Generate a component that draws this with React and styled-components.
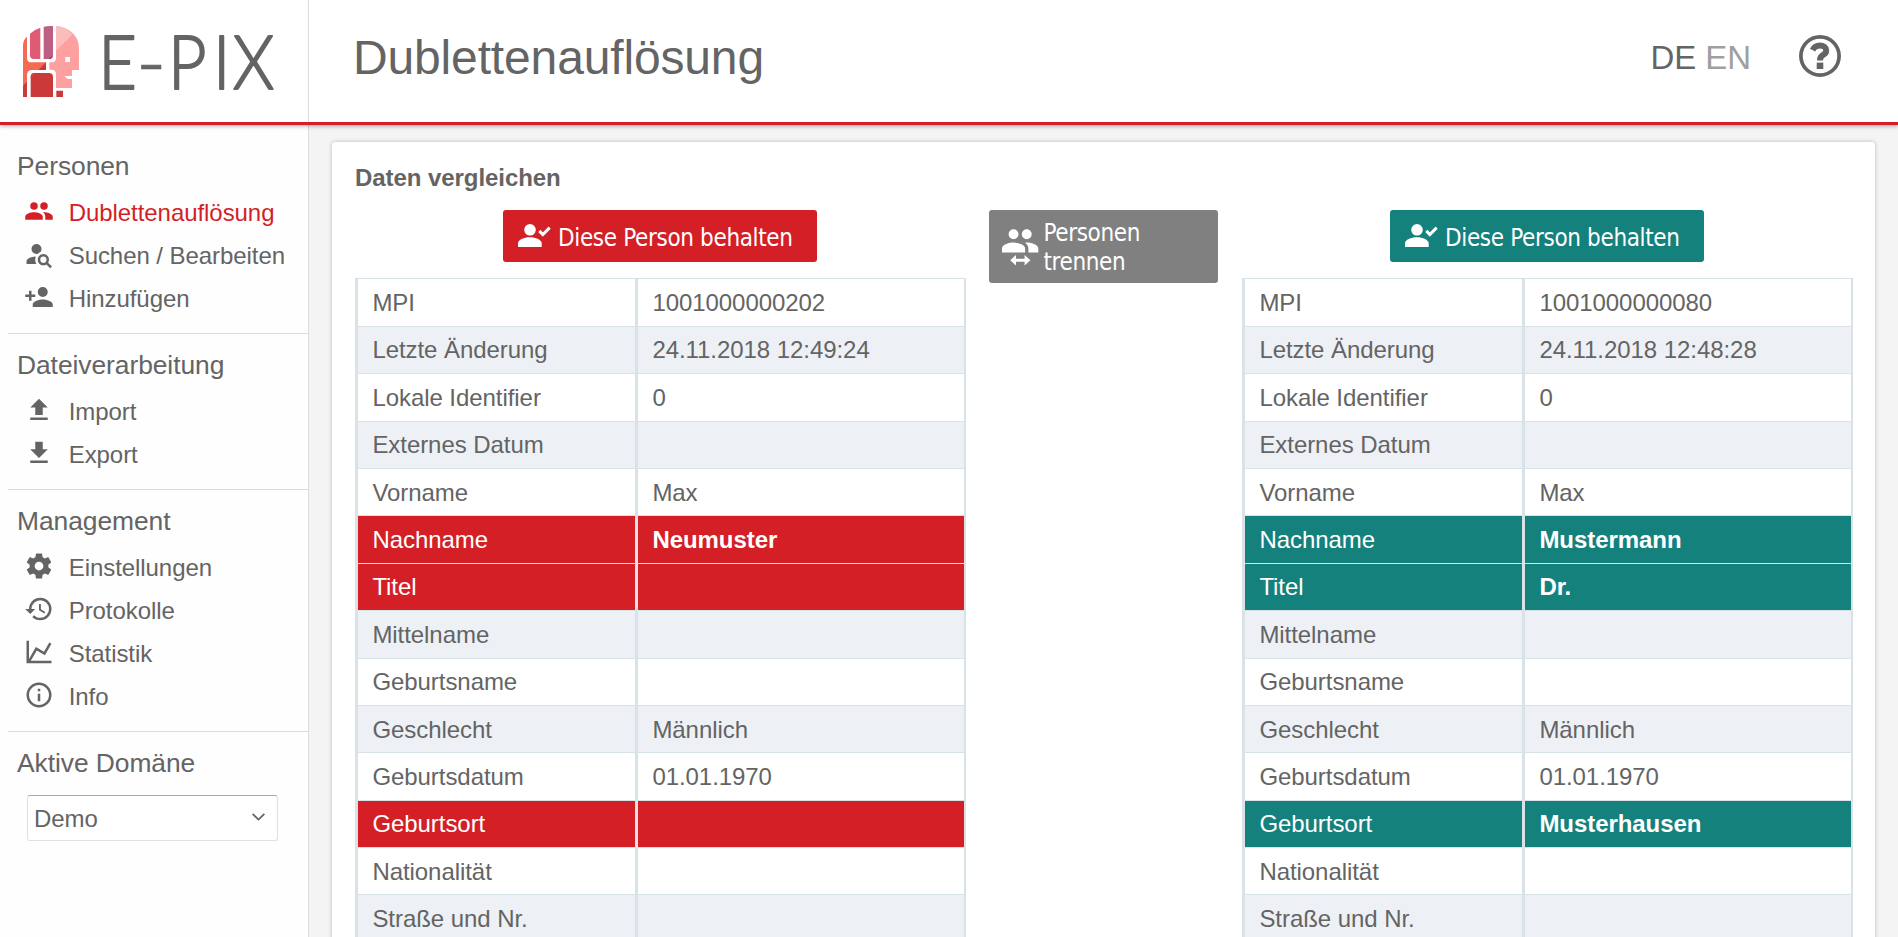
import React from "react";
import styled, { createGlobalStyle, ThemeProvider } from "styled-components";

const theme = {
  text: "#646464",
  muted: "#9f9f9f",
  red: "#d41f26",
  teal: "#14817d",
  grey: "#808080",
  line: "#d9e2e7",
  stripe: "#edf1f6",
};

const GlobalStyle = createGlobalStyle`
  * { box-sizing: border-box; }
  body {
    margin: 0;
    overflow: hidden;
    background: #f4f4f4;
    color: ${theme.text};
    font-family: "Liberation Sans", Arial, sans-serif;
    font-size: 24px;
    letter-spacing: -0.06px;
    font-variant-ligatures: none;
  }
`;

const Page = styled.div`
  display: flex;
  flex-direction: column;
  height: 937px;
  overflow: hidden;
`;

const Header = styled.header`
  position: relative;
  z-index: 1;
  flex: none;
  display: flex;
  align-items: stretch;
  height: 125px;
  background: #fff;
  border-bottom: 3px solid ${(p) => p.theme.red};
  box-shadow: 0 1px 4px rgba(0, 0, 0, 0.35);
`;

const Brand = styled.div`
  flex: none;
  width: 309px;
  border-right: 1px solid #dcdcdc;
  svg { display: block; }
`;

const PageTitle = styled.h1`
  flex: 1;
  margin: 0;
  padding: 30px 0 0 44px;
  font-size: 48px;
  line-height: 55px;
  font-weight: 400;
  letter-spacing: -0.15px;
`;

const Languages = styled.nav`
  display: flex;
  gap: 9px;
  padding-top: 38px;
  font-size: 33px;
  line-height: 39px;
`;

const Language = styled.span`
  color: ${(p) => (p.$active ? p.theme.text : p.theme.muted)};
`;

const HelpButton = styled.div`
  padding: 35px 57px 0 48px;
  svg { display: block; }
`;

const Body = styled.div`
  flex: 1;
  min-height: 0;
  display: flex;
`;

const Sidebar = styled.aside`
  flex: none;
  width: 309px;
  padding: 10.05px 0 0 8px;
  background: #fefefe;
  border-right: 1px solid #dcdcdc;
`;

const Section = styled.section`
  padding: 10.85px 0 13.1px;
  border-bottom: ${(p) => (p.$last ? "none" : "1px solid #dcdcdc")};
`;

const SectionTitle = styled.h2`
  margin: 0 0 5.4px;
  padding-left: 9px;
  font-size: 26.4px;
  line-height: 40px;
  font-weight: 400;
`;

const MenuItem = styled.div`
  display: flex;
  align-items: center;
  gap: 14px;
  height: 42.9px;
  padding-left: 16.3px;
  white-space: nowrap;
  color: ${(p) => (p.$active ? p.theme.red : "inherit")};
  svg { flex: none; margin-bottom: 3px; }
`;

const MenuLabel = styled.span`
  padding-left: 0.4px;
`;

const Select = styled.div`
  display: flex;
  align-items: center;
  justify-content: space-between;
  width: 251px;
  height: 46px;
  margin: 12px 0 0 19px;
  padding: 2px 12px 0 6px;
  background: #fff;
  border: 1px solid #dde0e7;
  border-top-color: #a8a8ac;
  border-radius: 3px;
  svg { margin-bottom: 3px; }
`;

const Main = styled.main`
  flex: 1;
  min-width: 0;
  padding: 17px 23px 0;
`;

const Card = styled.div`
  height: 900px;
  padding: 22px 22px 0 23px;
  background: #fff;
  border-radius: 3px;
  box-shadow: 0 0 4px rgba(0, 0, 0, 0.24);
`;

const CardTitle = styled.h3`
  margin: 0 0 18px;
  font-size: 24px;
  line-height: 28px;
  font-weight: 700;
`;

const Compare = styled.div`
  display: grid;
  grid-template-columns: 611px 229px 611px;
  column-gap: 23px;
  align-items: start;
`;

const PersonColumn = styled.div`
  display: flex;
  flex-direction: column;
  gap: 16.4px;
  &:last-child { margin-left: 1px; margin-right: -1px; }
`;

const ActionButton = styled.button`
  display: flex;
  align-items: center;
  border: 0;
  border-radius: 3px;
  color: #fff;
  background: ${(p) => p.theme[p.$tone]};
  font-family: "DejaVu Sans Condensed", "DejaVu Sans", sans-serif;
  font-size: 24px;
  line-height: 29px;
  letter-spacing: -0.35px;
  text-align: left;
  svg { flex: none; display: block; }
`;

const KeepButton = styled(ActionButton)`
  align-self: center;
  width: 314px;
  height: 52px;
  margin-right: 1px;
  gap: 7px;
  padding: 5px 0 0 15px;
  white-space: nowrap;
  svg { margin-bottom: 6px; }
`;

const SplitButton = styled(ActionButton)`
  width: 229px;
  height: 73px;
  gap: 4.4px;
  padding: 3px 50px 0 13px;
  svg { margin-bottom: 2px; }
`;

const Table = styled.div`
  border-top: 1px solid ${(p) => p.theme.line};
  border-right: 2px solid ${(p) => p.theme.line};
`;

const Cell = styled.div`
  display: flex;
  align-items: center;
  padding: 0.8px 0 0 14.4px;
  border-left: 3px solid ${(p) => p.theme.line};
  border-bottom: 1px solid ${(p) => p.theme.line};
`;

const Row = styled.div`
  display: grid;
  grid-template-columns: 280px 1fr;
  height: 47.4px;
  background: #fff;
  &:nth-child(even) { background: ${(p) => p.theme.stripe}; }
  && {
    ${(p) => p.$tone && `background: ${p.theme[p.$tone]}; color: #fff;`}
  }
  ${Cell} + ${Cell} { font-weight: ${(p) => (p.$tone ? 700 : 400)}; }
`;

const ICONS = {
  people:
    "M16,13C15.71,13 15.38,13 15.03,13.05C16.19,13.89 17,15 17,16.5V19H23V16.5C23,14.17 18.33,13 16,13M8,13C5.67,13 1,14.17 1,16.5V19H15V16.5C15,14.17 10.33,13 8,13M8,11A3,3 0 0,0 11,8A3,3 0 0,0 8,5A3,3 0 0,0 5,8A3,3 0 0,0 8,11M16,11A3,3 0 0,0 19,8A3,3 0 0,0 16,5A3,3 0 0,0 13,8A3,3 0 0,0 16,11Z",
  search:
    "M15.5,12C18,12 20,14 20,16.5C20,17.38 19.75,18.21 19.31,18.9L22.39,22L21,23.39L17.88,20.32C17.19,20.75 16.37,21 15.5,21C13,21 11,19 11,16.5C11,14 13,12 15.5,12M15.5,14A2.5,2.5 0 0,0 13,16.5A2.5,2.5 0 0,0 15.5,19A2.5,2.5 0 0,0 18,16.5A2.5,2.5 0 0,0 15.5,14M10,4A4,4 0 0,1 14,8C14,8.91 13.69,9.75 13.18,10.43C12.32,10.75 11.55,11.26 10.91,11.9L10,12A4,4 0 0,1 6,8A4,4 0 0,1 10,4M2,20V18C2,15.88 5.31,14.14 9.5,14C9.18,14.78 9,15.62 9,16.5C9,17.79 9.38,19 10,20H2Z",
  add: "M15,14C12.33,14 7,15.33 7,18V20H23V18C23,15.33 17.67,14 15,14M6,10V7H4V10H1V12H4V15H6V12H9V10M15,12A4,4 0 0,0 19,8A4,4 0 0,0 15,4A4,4 0 0,0 11,8A4,4 0 0,0 15,12Z",
  upload: "M9,16V10H5L12,3L19,10H15V16H9M5,20V18H19V20H5Z",
  download: "M5,20H19V18H5M19,9H15V3H9V9H5L12,16L19,9Z",
  cog: "M12,15.5A3.5,3.5 0 0,1 8.5,12A3.5,3.5 0 0,1 12,8.5A3.5,3.5 0 0,1 15.5,12A3.5,3.5 0 0,1 12,15.5M19.43,12.97C19.47,12.65 19.5,12.33 19.5,12C19.5,11.67 19.47,11.34 19.43,11L21.54,9.37C21.73,9.22 21.78,8.95 21.66,8.73L19.66,5.27C19.54,5.05 19.27,4.96 19.05,5.05L16.56,6.05C16.04,5.66 15.5,5.32 14.87,5.07L14.5,2.42C14.46,2.18 14.25,2 14,2H10C9.75,2 9.54,2.18 9.5,2.42L9.13,5.07C8.5,5.32 7.96,5.66 7.44,6.05L4.95,5.05C4.73,4.96 4.46,5.05 4.34,5.27L2.34,8.73C2.21,8.95 2.27,9.22 2.46,9.37L4.57,11C4.53,11.34 4.5,11.67 4.5,12C4.5,12.33 4.53,12.65 4.57,12.97L2.46,14.63C2.27,14.78 2.21,15.05 2.34,15.27L4.34,18.73C4.46,18.95 4.73,19.03 4.95,18.95L7.44,17.94C7.96,18.34 8.5,18.68 9.13,18.93L9.5,21.58C9.54,21.82 9.75,22 10,22H14C14.25,22 14.46,21.82 14.5,21.58L14.87,18.93C15.5,18.67 16.04,18.34 16.56,17.94L19.05,18.95C19.27,19.03 19.54,18.95 19.66,18.73L21.66,15.27C21.78,15.05 21.73,14.78 21.54,14.63L19.43,12.97Z",
  history:
    "M13.5,8H12V13L16.28,15.54L17,14.33L13.5,12.25V8M13,3A9,9 0 0,0 4,12H1L4.96,16.03L9,12H6A7,7 0 0,1 13,5A7,7 0 0,1 20,12A7,7 0 0,1 13,19C11.07,19 9.32,18.21 8.06,16.94L6.64,18.36C8.27,20 10.5,21 13,21A9,9 0 0,0 22,12A9,9 0 0,0 13,3",
  chart:
    "M16,11.78L20.24,4.45L21.97,5.45L16.74,14.5L10.23,10.75L5.46,19H22V21H2V3H4V17.54L9.5,8L16,11.78Z",
  info: "M11,9H13V7H11M12,20C7.59,20 4,16.41 4,12C4,7.59 7.59,4 12,4C16.41,4 20,7.59 20,12C20,16.41 16.41,20 12,20M12,2A10,10 0 0,0 2,12A10,10 0 0,0 12,22A10,10 0 0,0 22,12A10,10 0 0,0 12,2M11,17H13V11H11V17Z",
};

const Icon = ({ name }) => (
  <svg width="30" height="30" viewBox="0 0 24 24" fill="currentColor">
    <path d={ICONS[name]} />
  </svg>
);

const KeepIcon = () => (
  <svg width="33" height="23" viewBox="0 0 33 23" fill="#fff">
    <circle cx="12" cy="5.8" r="5.8" />
    <path d="M0 23V19.4C0 15.6 6 13.2 11.8 13.2S23.7 15.6 23.7 19.4V23Z" />
    <path d="M21.3 6.9L24.8 10.5L31.7 3.6" fill="none" stroke="#fff" strokeWidth="3" />
  </svg>
);

const SplitIcon = () => (
  <svg width="37" height="37" viewBox="0 0 37 37" fill="#fff">
    <path d={ICONS.people} transform="translate(-1.65 -7.9) scale(1.65)" />
    <path d="M8.2 31.2L14 25.9V29.7H22.6V25.9L28.4 31.2L22.6 36.5V32.7H14V36.5Z" />
  </svg>
);

const HelpIcon = () => (
  <svg width="42" height="42" viewBox="0 0 42 42" fill="none" stroke="#646464">
    <circle cx="21" cy="21" r="19.1" strokeWidth="3.7" />
    <path
      d="M13.6 15.1C15.4 11.6 17.8 10.6 21 10.6C24.6 10.6 27.2 12.6 27.2 15.4C27.2 18 25.8 19 23.8 20.1C21.8 21.2 21 22.1 21 25.4"
      strokeWidth="6"
    />
    <path d="M21 27.6V34" strokeWidth="6.6" />
  </svg>
);

const Logo = () => (
  <svg width="308" height="122" viewBox="0 0 308 122">
    <g transform="scale(0.33333)">
      <path fill="#f46a52" d="M69 291V138C69 126 73 116 81 110V173Q81 187 95 187H138V210H97Q81 210 81 226V291Z" />
      <path fill="#cc3939" d="M138 187V210H115ZM69 257L81 245V291H69Z" />
      <path fill="#df5a73" d="M90 101Q104 88 121 83V177H101Q90 177 90 166Z" />
      <path fill="#bb6083" d="M131 80Q145 77 159 78V165Q159 177 147 177H131Z" />
      <path fill="#a3285a" d="M145 177L158 168Q157 177 147 177Z" />
      <path fill="#ffa0a0" d="M168 78C207 82 237 106 237 145V210H216V264H168V223Q168 209 154 209H148V187H154Q168 187 168 173Z" />
      <path fill="#fbbcbc" d="M168 78C188 80 205 89 218 103L168 152Z" />
      <path fill="#fff" d="M196 171H210V186H196ZM194 228H216V237H205Q198 236 194 228Z" />
      <path fill="#cc3939" d="M104 219H147Q159 219 159 231V291H92V231Q92 219 104 219ZM169 272H189V291H169Z" />
      <path fill="#d5433d" d="M92 231Q92 219 104 219H106L92 233Z" />
    </g>
    <text
      transform="scale(0.9 1)"
      fontFamily="Lato, sans-serif"
      fontWeight="300"
      fontSize="74"
      letterSpacing="0"
      fill="#646464"
      stroke="#646464"
      strokeWidth="1.9"
      strokeLinejoin="round"
    >
      <tspan x="109.3" y="88.8">E</tspan>
      <tspan x="150.5" y="95.3" fontSize="94" strokeWidth="0.6">-</tspan>
      <tspan x="186.8 236.7 258.7" y="88.8">PIX</tspan>
    </text>
  </svg>
);

const MENU = [
  ["Personen", [["people", "Dublettenauflösung", true], ["search", "Suchen / Bearbeiten"], ["add", "Hinzufügen"]]],
  ["Dateiverarbeitung", [["upload", "Import"], ["download", "Export"]]],
  ["Management", [["cog", "Einstellungen"], ["history", "Protokolle"], ["chart", "Statistik"], ["info", "Info"]]],
];

const FIELDS = [
  ["MPI", "1001000000202", "1001000000080"],
  ["Letzte Änderung", "24.11.2018 12:49:24", "24.11.2018 12:48:28"],
  ["Lokale Identifier", "0", "0"],
  ["Externes Datum", "", ""],
  ["Vorname", "Max", "Max"],
  ["Nachname", "Neumuster", "Mustermann", true],
  ["Titel", "", "Dr.", true],
  ["Mittelname", "", ""],
  ["Geburtsname", "", ""],
  ["Geschlecht", "Männlich", "Männlich"],
  ["Geburtsdatum", "01.01.1970", "01.01.1970"],
  ["Geburtsort", "", "Musterhausen", true],
  ["Nationalität", "", ""],
  ["Straße und Nr.", "", ""],
];

const Person = ({ tone, side }) => (
  <PersonColumn>
    <KeepButton $tone={tone}>
      <KeepIcon />
      <span>Diese Person behalten</span>
    </KeepButton>
    <Table>
      {FIELDS.map((field) => (
        <Row key={field[0]} $tone={field[3] ? tone : null}>
          <Cell>{field[0]}</Cell>
          <Cell>{field[side]}</Cell>
        </Row>
      ))}
    </Table>
  </PersonColumn>
);

export default function App() {
  return (
    <ThemeProvider theme={theme}>
      <GlobalStyle />
      <Page>
        <Header>
          <Brand>
            <Logo />
          </Brand>
          <PageTitle>Dublettenauflösung</PageTitle>
          <Languages>
            <Language $active>DE</Language>
            <Language>EN</Language>
          </Languages>
          <HelpButton>
            <HelpIcon />
          </HelpButton>
        </Header>
        <Body>
          <Sidebar>
            {MENU.map(([title, items]) => (
              <Section key={title}>
                <SectionTitle>{title}</SectionTitle>
                {items.map(([icon, label, active]) => (
                  <MenuItem key={label} $active={active}>
                    <Icon name={icon} />
                    <MenuLabel>{label}</MenuLabel>
                  </MenuItem>
                ))}
              </Section>
            ))}
            <Section $last>
              <SectionTitle>Aktive Domäne</SectionTitle>
              <Select>
                <span>Demo</span>
                <svg width="13" height="8" viewBox="0 0 13 8" fill="none" stroke="#646464" strokeWidth="1.8">
                  <path d="M0.6 0.8L6.5 6.6L12.4 0.8" />
                </svg>
              </Select>
            </Section>
          </Sidebar>
          <Main>
            <Card>
              <CardTitle>Daten vergleichen</CardTitle>
              <Compare>
                <Person tone="red" side={1} />
                <SplitButton $tone="grey">
                  <SplitIcon />
                  <span>Personen trennen</span>
                </SplitButton>
                <Person tone="teal" side={2} />
              </Compare>
            </Card>
          </Main>
        </Body>
      </Page>
    </ThemeProvider>
  );
}
